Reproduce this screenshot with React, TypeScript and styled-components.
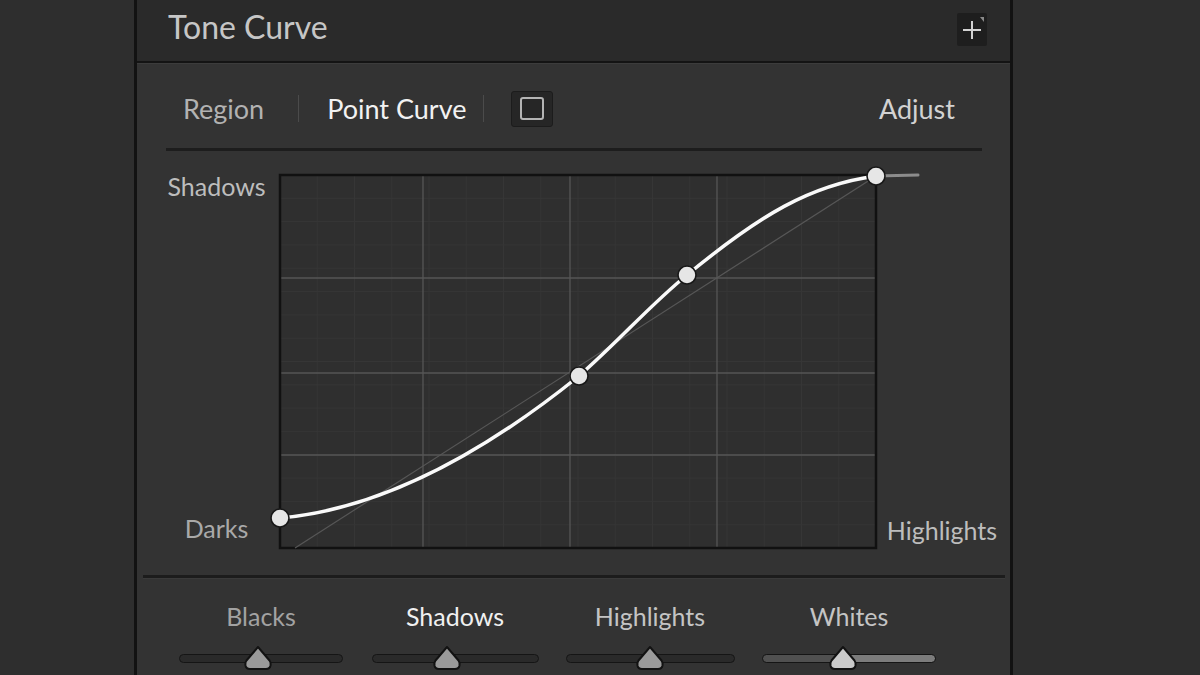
import React from "react";
import styled, { createGlobalStyle } from "styled-components";

const GlobalStyle = createGlobalStyle`
  html, body {
    margin: 0;
    padding: 0;
    background: #2e2e2e;
  }
  body {
    font-family: "Lato", "Noto Sans", sans-serif;
  }
`;

const Page = styled.div`
  width: 1200px;
  height: 675px;
  display: flex;
  background: #2e2e2e;
  overflow: hidden;
`;

const Panel = styled.div`
  margin-left: 134px;
  width: 873px;
  border-left: 3px solid #121212;
  border-right: 3px solid #121212;
  display: flex;
  flex-direction: column;
  background: #333333;
`;

const Header = styled.div`
  height: 63px;
  box-sizing: border-box;
  display: flex;
  align-items: center;
  justify-content: space-between;
  padding: 0 23px 7px 31px;
  background: #2a2a2a;
  border-bottom: 2px solid #141414;
`;

const Title = styled.h1`
  margin: 0;
  font-size: 32px;
  font-weight: 400;
  line-height: 36px;
  color: #c6c6c6;
`;

const AddButton = styled.button`
  width: 30px;
  height: 33px;
  padding: 0;
  border: none;
  border-radius: 2px;
  background: #1e1e1e;
  display: flex;
  align-items: center;
  justify-content: center;
  margin-top: 4px;
`;

const Body = styled.div`
  flex: 1;
  border-top: 1px solid #3c3c3c;
  display: flex;
  flex-direction: column;
`;

const Tabs = styled.div`
  height: 87px;
  box-sizing: border-box;
  margin: 0 28px 0 29px;
  padding: 5px 27px 0 17px;
  display: flex;
  align-items: center;
  border-bottom: 3px solid #1d1d1d;
`;

const Tab = styled.span<{ $active?: boolean }>`
  font-size: 27px;
  line-height: 32px;
  color: ${(p) => (p.$active ? "#f2f2f2" : "#b2b2b2")};
`;

const Separator = styled.span<{ $left: number; $right: number }>`
  width: 1px;
  height: 27px;
  background: #4b4b4b;
  margin: 0 ${(p) => p.$right}px 0 ${(p) => p.$left}px;
`;

const BoxToggle = styled.button`
  width: 42px;
  height: 36px;
  padding: 0;
  border: 1px solid #1c1c1c;
  border-radius: 3px;
  background: #262626;
  display: flex;
  align-items: center;
  justify-content: center;
`;

const BoxGlyph = styled.span`
  width: 20px;
  height: 19px;
  border: 2.5px solid #b4b4b4;
  border-radius: 3px;
`;

const Adjust = styled.span`
  margin-left: auto;
  font-size: 27px;
  line-height: 32px;
  color: #d2d2d2;
`;

const GraphRow = styled.div`
  margin: 0 5px 0 6px;
  padding: 24px 0 27px;
  display: grid;
  grid-template-columns: 137px 596px 1fr;
  border-bottom: 3px solid #1c1c1c;
  box-shadow: 0 1px 0 #3a3a3a;
`;

const LeftLabels = styled.div`
  display: flex;
  flex-direction: column;
  justify-content: space-between;
  align-items: center;
  padding: 0 0 7px 10px;
  margin-top: -2px;
`;

const RightLabels = styled.div`
  display: flex;
  flex-direction: column;
  justify-content: flex-end;
  align-items: center;
  padding: 0 0 5px 3px;
`;

const AxisLabel = styled.span<{ $dim?: boolean }>`
  font-size: 25px;
  line-height: 26px;
  color: ${(p) => (p.$dim ? "#a9a9a9" : "#bdbdbd")};
`;

const Graph = styled.svg`
  display: block;
  overflow: visible;
`;

const Sliders = styled.div`
  padding: 25px 0 0 27px;
  display: grid;
  grid-template-columns: 194px 194px 196px 202px;
`;

const SliderGroup = styled.div`
  display: flex;
  flex-direction: column;
  align-items: center;
  gap: 17px;
`;

const SliderLabel = styled.span<{ $tone: string }>`
  font-size: 25px;
  line-height: 26px;
  color: ${(p) => p.$tone};
`;

const Track = styled.div<{ $width: number }>`
  position: relative;
  width: ${(p) => p.$width}px;
  height: 24px;
  display: flex;
  align-items: center;
`;

const Rail = styled.div<{ $lit?: boolean }>`
  width: 100%;
  height: 7px;
  border: 1.5px solid #151515;
  border-radius: 5px;
  background: ${(p) =>
    p.$lit
      ? "linear-gradient(to right, #505050 0 47%, #7c7c7c 47% 100%)"
      : "#2a2a2a"};
`;

const Thumb = styled.svg`
  position: absolute;
  top: -2px;
  width: 30px;
  height: 28px;
  transform: translateX(-50%);
`;

const W = 596;
const H = 373;
const vLines = [143, 290, 437];
const hLines = [103, 198, 280];
const points: [number, number][] = [
  [0, 343],
  [299, 201],
  [407, 100],
  [596, 1],
];

const sliders = [
  { name: "Blacks", tone: "#a2a2a2", pos: 48, fill: "#9a9a9a", width: 164 },
  { name: "Shadows", tone: "#f0f0f0", pos: 45.5, fill: "#9a9a9a", width: 167 },
  { name: "Highlights", tone: "#c4c4c4", pos: 50, fill: "#9a9a9a", width: 169 },
  { name: "Whites", tone: "#c4c4c4", pos: 46.5, fill: "#cacaca", width: 174, lit: true },
];

const CurveGraph: React.FC = () => {
  const sub: number[] = [];
  for (let i = 1; i < 16; i++) sub.push(i);
  return (
    <Graph width={W} height={H} viewBox={`0 0 ${W} ${H}`}>
      <rect x={0} y={0} width={W} height={H} fill="#2f2f2f" />
      {sub.map((i) => (
        <line
          key={"sv" + i}
          x1={(W / 16) * i}
          y1={0}
          x2={(W / 16) * i}
          y2={H}
          stroke="#363636"
          strokeWidth={1}
        />
      ))}
      {sub.map((i) => (
        <line
          key={"sh" + i}
          x1={0}
          y1={(H / 16) * i}
          x2={W}
          y2={(H / 16) * i}
          stroke="#363636"
          strokeWidth={1}
        />
      ))}
      {vLines.map((x) => (
        <line key={"v" + x} x1={x} y1={0} x2={x} y2={H} stroke="#565656" strokeWidth={1.3} />
      ))}
      {hLines.map((y) => (
        <line key={"h" + y} x1={0} y1={y} x2={W} y2={y} stroke="#565656" strokeWidth={1.3} />
      ))}
      <rect x={0} y={0} width={W} height={H} fill="none" stroke="#111" strokeWidth={2.5} />
      <line x1={15} y1={373} x2={596} y2={1} stroke="#575757" strokeWidth={1.2} />
      <line x1={596} y1={1} x2={638} y2={0} stroke="#8c8c8c" strokeWidth={3} strokeLinecap="round" />
      <path
        d="M0,343 C70,337 170,305 299,201 C340,165 370,130 407,100 C480,40 530,10 596,1"
        fill="none"
        stroke="#fafafa"
        strokeWidth={3.5}
      />
      {points.map(([x, y]) => (
        <circle key={x} cx={x} cy={y} r={9} fill="#e6e6e6" stroke="#181818" strokeWidth={1.6} />
      ))}
    </Graph>
  );
};

const App: React.FC = () => {
  return (
    <Page>
      <GlobalStyle />
      <Panel>
        <Header>
          <Title>Tone Curve</Title>
          <AddButton>
            <svg width="30" height="33" viewBox="0 0 30 33">
              <path d="M6 17 H24 M15 8 V26" stroke="#d2d2d2" strokeWidth="2" fill="none" />
              <path d="M23 4 L27 4 L27 9 Z" fill="#8a8a8a" />
            </svg>
          </AddButton>
        </Header>
        <Body>
          <Tabs>
            <Tab>Region</Tab>
            <Separator $left={34} $right={28} />
            <Tab $active>Point Curve</Tab>
            <Separator $left={17} $right={27} />
            <BoxToggle>
              <BoxGlyph />
            </BoxToggle>
            <Adjust>Adjust</Adjust>
          </Tabs>
          <GraphRow>
            <LeftLabels>
              <AxisLabel>Shadows</AxisLabel>
              <AxisLabel $dim>Darks</AxisLabel>
            </LeftLabels>
            <CurveGraph />
            <RightLabels>
              <AxisLabel>Highlights</AxisLabel>
            </RightLabels>
          </GraphRow>
          <Sliders>
            {sliders.map((s) => (
              <SliderGroup key={s.name}>
                <SliderLabel $tone={s.tone}>{s.name}</SliderLabel>
                <Track $width={s.width}>
                  <Rail $lit={s.lit} />
                  <Thumb viewBox="0 0 30 28" style={{ left: `${s.pos}%` }}>
                    <path
                      d="M15 3 L26.5 16.5 Q28 18.5 27.5 21.5 Q26.8 25 23 25 L7 25 Q3.2 25 2.5 21.5 Q2 18.5 3.5 16.5 Z"
                      fill={s.fill}
                      stroke="#121212"
                      strokeWidth={2}
                      strokeLinejoin="round"
                    />
                  </Thumb>
                </Track>
              </SliderGroup>
            ))}
          </Sliders>
        </Body>
      </Panel>
    </Page>
  );
};

export default App;
